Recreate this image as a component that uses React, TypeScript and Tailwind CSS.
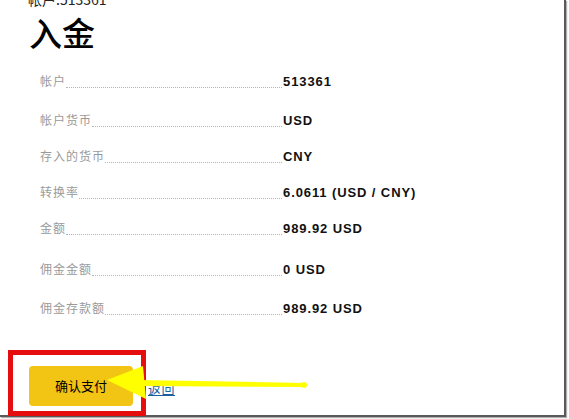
import React from 'react';

const rows = [
  { label: '帐户', value: '513361', gap: 'mt-[21px]' },
  { label: '帐户货币', value: 'USD', gap: 'mt-[25px]' },
  { label: '存入的货币', value: 'CNY', gap: 'mt-[22px]' },
  { label: '转换率', value: '6.0611 (USD / CNY)', gap: 'mt-[22px]' },
  { label: '金额', value: '989.92 USD', gap: 'mt-[22px]' },
  { label: '佣金金额', value: '0 USD', gap: 'mt-[27px]' },
  { label: '佣金存款额', value: '989.92 USD', gap: 'mt-[25px]' },
];

const cjk = { fontFamily: '"Noto Sans CJK SC", "Noto Sans", sans-serif' };

const App: React.FC = () => {
  return (
    <div className="relative w-[569px] h-[419px] overflow-hidden bg-white">
      <div className="flex flex-col w-[566px] h-[417px] border-r-2 border-b-2 border-[#5a5a5a] shadow-[1px_1px_1px_#b0b0b0]">
        <div className="pl-[28px] -mt-[9px] text-[14px] leading-[16px] text-[#222]" style={cjk}>
          帐户:513361
        </div>
        <h1 className="pl-[29px] mt-[7px] text-[33px] leading-[36px] font-medium text-black" style={cjk}>
          入金
        </h1>

        <div className="pl-[40px] mt-[4px]">
          {rows.map((r) => (
            <div key={r.label} className={`flex items-end h-[14px] ${r.gap}`}>
              <div className="flex items-end w-[243px]">
                <span className="text-[12px] leading-[14px] tracking-[1px] text-[#9a9a9a] mb-[1px]" style={cjk}>
                  {r.label}
                </span>
                <span className="flex-1 mr-[1px] mb-[1px] border-b border-dotted border-[#b5b5b5]" />
              </div>
              <span
                className="text-[13px] leading-[14px] font-bold tracking-[0.9px] text-[#111]"
                style={{ fontFamily: '"Liberation Sans", Arial, sans-serif' }}
              >
                {r.value}
              </span>
            </div>
          ))}
        </div>

        <div className="flex items-center pl-[29px] mt-[50px]">
          <button
            className="w-[104px] h-[40px] rounded-[4px] bg-[#f2c413] text-[13px] text-black"
            style={cjk}
          >
            确认支付
          </button>
          <a className="ml-[15px] mt-[6px] text-[13px] tracking-[0.5px] text-[#1b5e9e] underline" style={cjk} href="#">
            返回
          </a>
        </div>
      </div>

      {/* annotation: red box */}
      <div className="absolute left-[8px] top-[350px] w-[138px] h-[66px] border-[5px] border-[#e50d0d]" />

      {/* annotation: yellow arrow */}
      <svg className="absolute left-0 top-0" width="569" height="419" viewBox="0 0 569 419">
        <path d="M140 380 L305 383 L305 387 L140 386 Z" fill="#ffff00" />
        <circle cx="304" cy="385" r="3" fill="#ffff00" />
        <path d="M107 380 L143 366 L146 399 Z" fill="#ffff00" />
      </svg>
    </div>
  );
};

export default App;
